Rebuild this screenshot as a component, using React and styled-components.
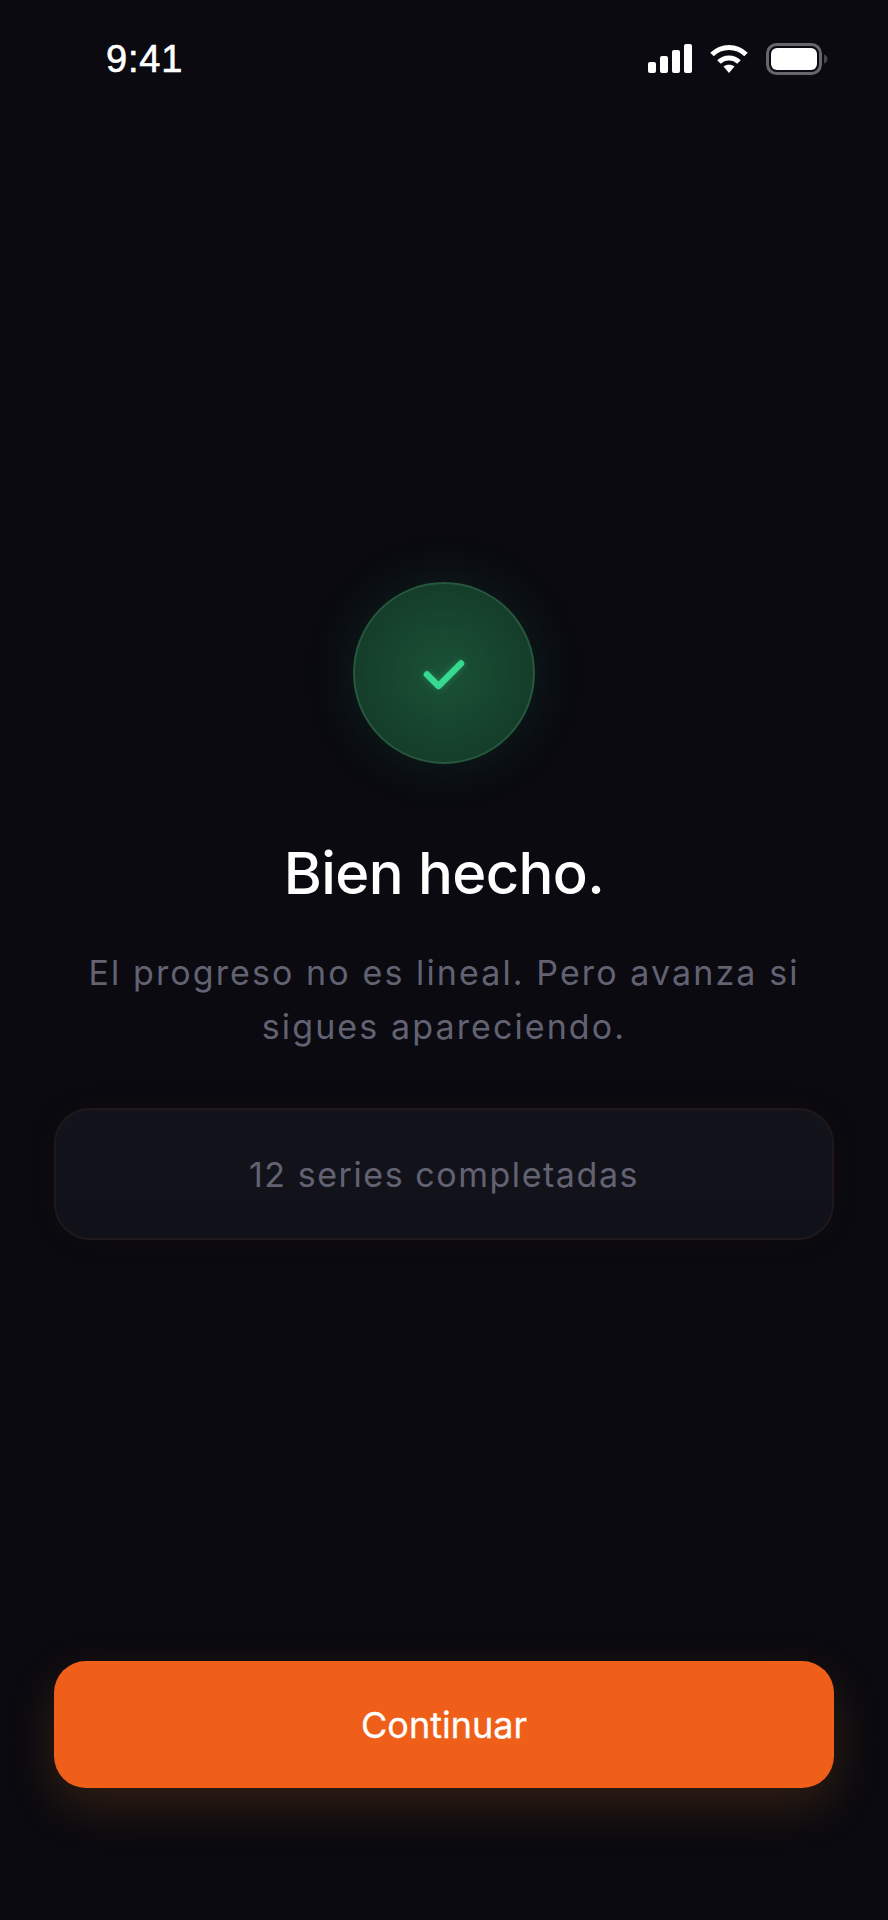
import styled, { createGlobalStyle } from "styled-components";

const GlobalStyle = createGlobalStyle`
    html, body {
        margin: 0;
        padding: 0;
        background: #0a0a0f;
    }
`;

const Screen = styled.div`
    width: 888px;
    height: 1920px;
    background: #0a0a10;
    font-family: Inter, "Liberation Sans", sans-serif;
    display: flex;
    flex-direction: column;
    overflow: hidden;
`;

const StatusBar = styled.div`
    height: 44px;
    padding: 37px 60px 0 106px;
    display: flex;
    align-items: center;
    justify-content: space-between;
`;

const Time = styled.span`
    color: #fff;
    font-family: "Liberation Sans", Arial, sans-serif;
    font-size: 38px;
    letter-spacing: 0.8px;
    -webkit-text-stroke: 0.6px #fff;
`;

const StatusIcons = styled.div`
    display: flex;
    align-items: center;
    gap: 18px;
`;

const Content = styled.main`
    flex: 1;
    padding: 501px 54px 0;
    display: flex;
    flex-direction: column;
    align-items: center;
`;

const Badge = styled.div`
    width: 182px;
    height: 182px;
    box-sizing: border-box;
    border-radius: 50%;
    border: 2px solid #27583f;
    background: radial-gradient(circle, #1a5236 0%, #153f2b 65%, #113224 100%);
    box-shadow: 0 0 56px rgba(46, 190, 120, 0.13);
    display: flex;
    align-items: center;
    justify-content: center;
`;

const CheckMark = styled.svg`
    margin-top: 4px;
    filter: drop-shadow(0 0 3px rgba(54, 217, 143, 0.35));
`;

const Title = styled.h1`
    margin: 73px 0 0;
    color: #fff;
    font-size: 58px;
    line-height: 72px;
    font-weight: 500;
    letter-spacing: -0.6px;
`;

const Subtitle = styled.p`
    margin: 37px 0 0;
    color: #626272;
    font-size: 34px;
    line-height: 54px;
    letter-spacing: 2.1px;
    text-align: center;
`;

const StatCard = styled.div`
    margin-top: 54px;
    width: 780px;
    height: 132px;
    box-sizing: border-box;
    border-radius: 36px;
    border: 2px solid #1f191c;
    background: linear-gradient(180deg, #13131b 0%, #111119 100%);
    box-shadow: 0 0 34px rgba(120, 60, 20, 0.07);
    color: #626272;
    font-size: 34px;
    letter-spacing: 1.55px;
    display: flex;
    align-items: center;
    justify-content: center;
`;

const Footer = styled.div`
    padding: 0 54px 132px;
`;

const PrimaryButton = styled.button`
    width: 780px;
    height: 127px;
    border: none;
    border-radius: 32px;
    background: #ef5f1a;
    box-shadow: 0 18px 50px rgba(240, 130, 30, 0.18);
    color: #fff;
    font-family: inherit;
    font-size: 36px;
    font-weight: 400;
    -webkit-text-stroke: 0.3px #fff;
`;

const App = () => {
    return (
        <Screen>
            <GlobalStyle />
            <StatusBar>
                <Time>9:41</Time>
                <StatusIcons>
                    <svg width="44" height="30" viewBox="0 0 44 30" fill="#fff">
                        <rect x="0" y="18" width="8" height="11" rx="2" />
                        <rect x="12" y="12" width="8" height="17" rx="2" />
                        <rect x="24" y="6" width="8" height="23" rx="2" />
                        <rect x="36" y="0" width="8" height="29" rx="2" />
                    </svg>
                    <svg width="38" height="30" viewBox="0 0 38 30" fill="none" stroke="#fff" strokeWidth="5">
                        <path d="M2 10.5 C11.5 1 26.5 1 36 10.5" />
                        <path d="M9 18 C14.5 12.5 23.5 12.5 29 18" />
                        <path d="M19 29 L13.5 22.5 C16.5 20 21.5 20 24.5 22.5 Z" fill="#fff" stroke="none" />
                    </svg>
                    <svg width="62" height="32" viewBox="0 0 62 32" fill="none">
                        <rect x="1.5" y="1.5" width="53" height="29" rx="9" stroke="#66666c" strokeWidth="3" />
                        <rect x="5" y="5" width="46" height="22" rx="6" fill="#fff" />
                        <path d="M58 11.5 C60.5 12.5 61.5 14 61.5 16 C61.5 18 60.5 19.5 58 20.5 Z" fill="#45454a" />
                    </svg>
                </StatusIcons>
            </StatusBar>
            <Content>
                <Badge>
                    <CheckMark width="42" height="32" viewBox="0 0 42 32" fill="none" stroke="#36d98f" strokeWidth="6.5" strokeLinecap="round" strokeLinejoin="round">
                        <path d="M4 15.5 L15.5 27 L38 4.5" />
                    </CheckMark>
                </Badge>
                <Title>Bien hecho.</Title>
                <Subtitle>
                    El progreso no es lineal. Pero avanza si
                    <br />
                    sigues apareciendo.
                </Subtitle>
                <StatCard>12 series completadas</StatCard>
            </Content>
            <Footer>
                <PrimaryButton>Continuar</PrimaryButton>
            </Footer>
        </Screen>
    );
};

export default App;
